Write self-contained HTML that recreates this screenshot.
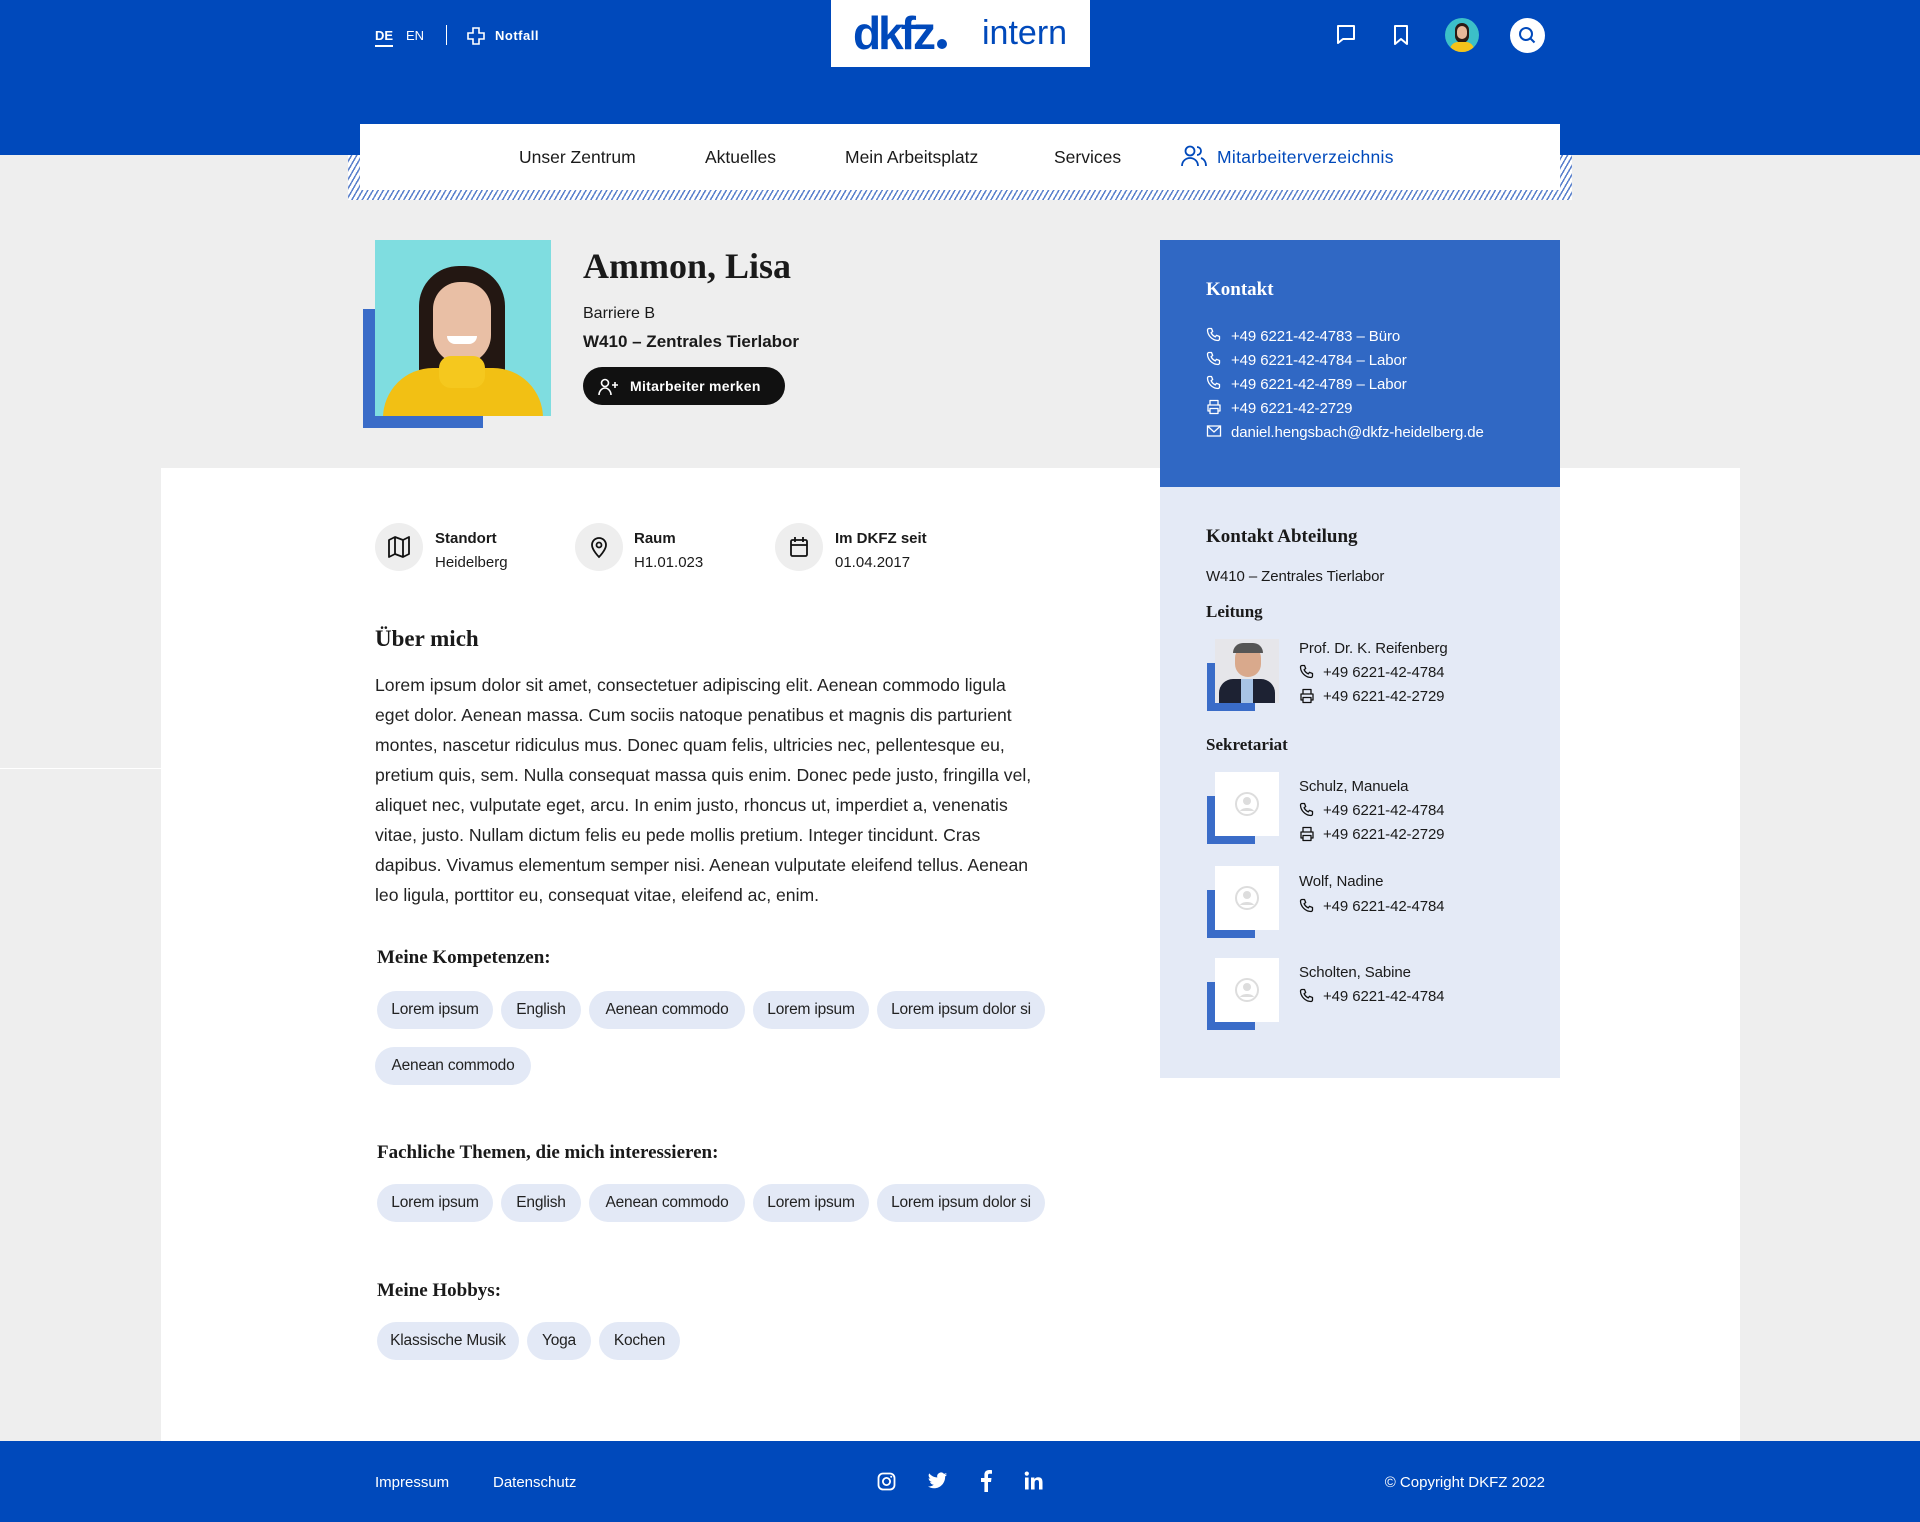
<!DOCTYPE html>
<html><head><meta charset="utf-8"><style>
*{margin:0;padding:0;box-sizing:border-box}
body{width:1920px;height:1522px;position:relative;background:#eeeeee;font-family:"Liberation Sans",sans-serif;color:#1a1a1a;overflow:hidden}
.a{position:absolute}
.serif{font-family:"Liberation Serif",serif;font-weight:bold}
.tag{position:absolute;height:38px;line-height:38px;border-radius:19px;background:#e3e9f6;font-size:15.5px;text-align:center;white-space:nowrap;letter-spacing:-0.2px;color:#222}
.w{color:#fff}
.sb{font-size:15px;white-space:nowrap;letter-spacing:-0.1px}
svg{display:block}
</style></head><body>
<!-- header -->
<div class="a" style="left:0;top:0;width:1920px;height:155px;background:#0049bb"></div>
<div class="a w" style="left:375px;top:28px;font-size:13px;font-weight:bold;border-bottom:2px solid #fff;padding-bottom:2px">DE</div>
<div class="a w" style="left:406px;top:28px;font-size:13px">EN</div>
<div class="a" style="left:446px;top:25px;width:1px;height:20px;background:#fff"></div>
<svg class="a" style="left:467px;top:27px" width="18" height="18" viewBox="0 0 18 18"><path d="M6 1h6v5h5v6h-5v5H6v-5H1V6h5z" fill="none" stroke="#fff" stroke-width="1.6"/></svg>
<div class="a w" style="left:495px;top:28px;font-size:13px;font-weight:bold;letter-spacing:0.5px">Notfall</div>
<div class="a" style="left:831px;top:0;width:259px;height:67px;background:#fff"></div>
<div class="a" style="left:853px;top:6px;font-size:46px;font-weight:bold;color:#0049bb;letter-spacing:-3px">dkfz<span style="display:inline-block;width:10px;height:10px;border-radius:50%;background:#0049bb;margin-left:4px"></span></div>
<div class="a" style="left:982px;top:14px;font-size:34px;color:#0049bb">intern</div>
<svg class="a" style="left:1335px;top:24px" width="22" height="22" viewBox="0 0 22 22"><path d="M3 2h16v13H8l-5 4z" fill="none" stroke="#fff" stroke-width="2" stroke-linejoin="round"/></svg>
<svg class="a" style="left:1392px;top:24px" width="18" height="22" viewBox="0 0 18 22"><path d="M3 2h12v18l-6-5-6 5z" fill="none" stroke="#fff" stroke-width="2" stroke-linejoin="round"/></svg>
<div class="a" style="left:1445px;top:18px;width:34px;height:34px;border-radius:50%;background:#3cc0c8;overflow:hidden"><div class="a" style="left:10px;top:5px;width:14px;height:20px;border-radius:7px;background:#2a1a14"></div><div class="a" style="left:12px;top:8px;width:10px;height:13px;border-radius:5px;background:#e6b89a"></div><div class="a" style="left:5px;top:24px;width:24px;height:14px;border-radius:8px 8px 0 0;background:#f5c21a"></div></div>
<div class="a" style="left:1510px;top:18px;width:35px;height:35px;border-radius:50%;background:#fff"></div>
<svg class="a" style="left:1517px;top:25px" width="21" height="21" viewBox="0 0 21 21"><circle cx="9" cy="9" r="6" fill="none" stroke="#0049bb" stroke-width="2"/><path d="M13.5 13.5l4 4" stroke="#0049bb" stroke-width="2"/></svg>
<!-- nav -->
<div class="a" style="left:348px;top:155px;width:1224px;height:45px;background:repeating-linear-gradient(-60deg,#fff 0 3px,#5a80cc 3px 4.5px)"></div>
<div class="a" style="left:360px;top:124px;width:1200px;height:66px;background:#fff"></div>
<div class="a" style="left:519px;top:147px;font-size:17.5px">Unser Zentrum</div>
<div class="a" style="left:705px;top:147px;font-size:17.5px">Aktuelles</div>
<div class="a" style="left:845px;top:147px;font-size:17.5px">Mein Arbeitsplatz</div>
<div class="a" style="left:1054px;top:147px;font-size:17.5px">Services</div>
<svg class="a" style="left:1181px;top:145px" width="26" height="22" viewBox="0 0 26 22"><circle cx="9" cy="6" r="4.5" fill="none" stroke="#0049bb" stroke-width="1.8"/><path d="M1 21c0-5 4-8 8-8s8 3 8 8" fill="none" stroke="#0049bb" stroke-width="1.8"/><path d="M16 2a4 4 0 010 8M20 13c3 1 5 4 5 8" fill="none" stroke="#0049bb" stroke-width="1.8"/></svg>
<div class="a" style="left:1217px;top:147px;font-size:17.5px;color:#0049bb;letter-spacing:0.3px">Mitarbeiterverzeichnis</div>
<!-- white main -->
<div class="a" style="left:161px;top:468px;width:1579px;height:973px;background:#fff"></div>
<div class="a" style="left:0;top:768px;width:161px;height:1px;background:#fff"></div>
<!-- profile -->
<div class="a" style="left:363px;top:309px;width:120px;height:119px;background:#3a6cc8"></div>
<div class="a" style="left:375px;top:240px;width:176px;height:176px;background:#7fdde0;overflow:hidden">
 <div class="a" style="left:44px;top:26px;width:86px;height:130px;border-radius:40px 40px 10px 10px;background:#231712"></div>
 <div class="a" style="left:58px;top:42px;width:58px;height:82px;border-radius:28px 28px 30px 30px;background:#e9bfa5"></div>
 <div class="a" style="left:72px;top:96px;width:30px;height:8px;border-radius:0 0 10px 10px;background:#fff"></div>
 <div class="a" style="left:8px;top:128px;width:160px;height:70px;border-radius:50px 50px 0 0;background:#f2c014"></div>
 <div class="a" style="left:64px;top:116px;width:46px;height:32px;border-radius:12px;background:#f5c81e"></div>
</div>
<div class="a serif" style="left:583px;top:245px;font-size:36px">Ammon, Lisa</div>
<div class="a" style="left:583px;top:305px;font-size:16px">Barriere B</div>
<div class="a" style="left:583px;top:332px;font-size:17px;font-weight:bold">W410 – Zentrales Tierlabor</div>
<div class="a" style="left:583px;top:367px;width:202px;height:38px;border-radius:19px;background:#111"></div>
<svg class="a" style="left:598px;top:378px" width="22" height="18" viewBox="0 0 22 18"><circle cx="7" cy="5" r="3.5" fill="none" stroke="#fff" stroke-width="1.6"/><path d="M1 17c0-4 3-7 6-7s6 3 6 7" fill="none" stroke="#fff" stroke-width="1.6"/><path d="M17 4v6M14 7h6" stroke="#fff" stroke-width="1.6"/></svg>
<div class="a w" style="left:630px;top:378px;font-size:14px;font-weight:bold;letter-spacing:0.3px">Mitarbeiter merken</div>
<!-- info -->
<div class="a" style="left:375px;top:523px;width:48px;height:48px;border-radius:50%;background:#eeeeee"></div>
<svg class="a" style="left:387px;top:535px" width="24" height="24" viewBox="0 0 24 24"><path d="M2 5l6-3 8 3 6-3v17l-6 3-8-3-6 3zM8 2v17M16 5v17" fill="none" stroke="#111" stroke-width="1.8" stroke-linejoin="round"/></svg>
<div class="a" style="left:435px;top:530px;font-size:15px;font-weight:bold">Standort</div>
<div class="a" style="left:435px;top:554px;font-size:15px">Heidelberg</div>
<div class="a" style="left:575px;top:523px;width:48px;height:48px;border-radius:50%;background:#eeeeee"></div>
<svg class="a" style="left:587px;top:535px" width="24" height="24" viewBox="0 0 24 24"><path d="M12 22s-7-7-7-12a7 7 0 0114 0c0 5-7 12-7 12z" fill="none" stroke="#111" stroke-width="1.8"/><circle cx="12" cy="10" r="2.5" fill="none" stroke="#111" stroke-width="1.8"/></svg>
<div class="a" style="left:634px;top:530px;font-size:15px;font-weight:bold">Raum</div>
<div class="a" style="left:634px;top:554px;font-size:15px">H1.01.023</div>
<div class="a" style="left:775px;top:523px;width:48px;height:48px;border-radius:50%;background:#eeeeee"></div>
<svg class="a" style="left:787px;top:535px" width="24" height="24" viewBox="0 0 24 24"><rect x="4" y="5" width="16" height="16" rx="1.5" fill="none" stroke="#111" stroke-width="1.8"/><path d="M4 10h16M8 2v5M16 2v5" stroke="#111" stroke-width="1.8"/></svg>
<div class="a" style="left:835px;top:530px;font-size:15px;font-weight:bold">Im DKFZ seit</div>
<div class="a" style="left:835px;top:554px;font-size:15px">01.04.2017</div>
<!-- about -->
<div class="a serif" style="left:375px;top:626px;font-size:23px">Über mich</div>
<div class="a" style="left:375px;top:670px;width:660px;font-size:17.6px;line-height:30px;color:#222">Lorem ipsum dolor sit amet, consectetuer adipiscing elit. Aenean commodo ligula eget dolor. Aenean massa. Cum sociis natoque penatibus et magnis dis parturient montes, nascetur ridiculus mus. Donec quam felis, ultricies nec, pellentesque eu, pretium quis, sem. Nulla consequat massa quis enim. Donec pede justo, fringilla vel, aliquet nec, vulputate eget, arcu. In enim justo, rhoncus ut, imperdiet a, venenatis vitae, justo. Nullam dictum felis eu pede mollis pretium. Integer tincidunt. Cras dapibus. Vivamus elementum semper nisi. Aenean vulputate eleifend tellus. Aenean leo ligula, porttitor eu, consequat vitae, eleifend ac, enim.</div>
<div class="a serif" style="left:377px;top:947px;font-size:19px">Meine Kompetenzen:</div>
<div class="tag" style="left:377px;top:991px;width:116px">Lorem ipsum</div>
<div class="tag" style="left:501px;top:991px;width:80px">English</div>
<div class="tag" style="left:589px;top:991px;width:156px">Aenean commodo</div>
<div class="tag" style="left:753px;top:991px;width:116px">Lorem ipsum</div>
<div class="tag" style="left:877px;top:991px;width:168px">Lorem ipsum dolor si</div>
<div class="tag" style="left:375px;top:1047px;width:156px">Aenean commodo</div>
<div class="a serif" style="left:377px;top:1142px;font-size:19px">Fachliche Themen, die mich interessieren:</div>
<div class="tag" style="left:377px;top:1184px;width:116px">Lorem ipsum</div>
<div class="tag" style="left:501px;top:1184px;width:80px">English</div>
<div class="tag" style="left:589px;top:1184px;width:156px">Aenean commodo</div>
<div class="tag" style="left:753px;top:1184px;width:116px">Lorem ipsum</div>
<div class="tag" style="left:877px;top:1184px;width:168px">Lorem ipsum dolor si</div>
<div class="a serif" style="left:377px;top:1280px;font-size:19px">Meine Hobbys:</div>
<div class="tag" style="left:377px;top:1322px;width:142px">Klassische Musik</div>
<div class="tag" style="left:527px;top:1322px;width:64px">Yoga</div>
<div class="tag" style="left:599px;top:1322px;width:81px">Kochen</div>
<!-- sidebar -->
<div class="a" style="left:1160px;top:240px;width:400px;height:247px;background:#3068c4"></div>
<div class="a" style="left:1160px;top:487px;width:400px;height:591px;background:#e4eaf6"></div>
<div class="a serif w" style="left:1206px;top:279px;font-size:19px">Kontakt</div>
<svg width="0" height="0" style="position:absolute"><defs>
<symbol id="ph" viewBox="0 0 16 16"><path d="M3 1.5l2.5 0 1.2 3-1.6 1.2c.8 1.8 2.4 3.4 4.2 4.2l1.2-1.6 3 1.2v2.5c0 .8-.7 1.5-1.5 1.5C6.5 13.5 1.5 8.5 1.5 3c0-.8.7-1.5 1.5-1.5z" fill="none" stroke="currentColor" stroke-width="1.3" stroke-linejoin="round"/></symbol>
<symbol id="fx" viewBox="0 0 16 16"><path d="M4 6V1.5h8V6M4 12H2V6h12v6h-2M4 9.5h8v5H4z" fill="none" stroke="currentColor" stroke-width="1.3" stroke-linejoin="round"/></symbol>
<symbol id="ml" viewBox="0 0 16 16"><rect x="1.5" y="3" width="13" height="10" fill="none" stroke="currentColor" stroke-width="1.3"/><path d="M1.5 3l6.5 6 6.5-6" fill="none" stroke="currentColor" stroke-width="1.3"/></symbol>
</defs></svg>
<svg class="a" style="left:1206px;top:327px;color:#fff" width="16" height="16"><use href="#ph"/></svg><div class="a w sb" style="left:1231px;top:328px">+49 6221-42-4783 – Büro</div>
<svg class="a" style="left:1206px;top:351px;color:#fff" width="16" height="16"><use href="#ph"/></svg><div class="a w sb" style="left:1231px;top:352px">+49 6221-42-4784 – Labor</div>
<svg class="a" style="left:1206px;top:375px;color:#fff" width="16" height="16"><use href="#ph"/></svg><div class="a w sb" style="left:1231px;top:376px">+49 6221-42-4789 – Labor</div>
<svg class="a" style="left:1206px;top:399px;color:#fff" width="16" height="16"><use href="#fx"/></svg><div class="a w sb" style="left:1231px;top:400px">+49 6221-42-2729</div>
<svg class="a" style="left:1206px;top:423px;color:#fff" width="16" height="16"><use href="#ml"/></svg><div class="a w sb" style="left:1231px;top:424px">daniel.hengsbach@dkfz-heidelberg.de</div>
<div class="a serif" style="left:1206px;top:526px;font-size:19px">Kontakt Abteilung</div>
<div class="a sb" style="left:1206px;top:568px">W410 – Zentrales Tierlabor</div>
<div class="a serif" style="left:1206px;top:602px;font-size:17px">Leitung</div>
<div class="a" style="left:1207px;top:663px;width:48px;height:48px;background:#3a6cc8"></div>
<div class="a" style="left:1215px;top:639px;width:64px;height:64px;background:#e6e6ea;overflow:hidden"><div class="a" style="left:20px;top:6px;width:26px;height:32px;border-radius:13px;background:#d9a98c"></div><div class="a" style="left:18px;top:4px;width:30px;height:10px;border-radius:10px 10px 0 0;background:#555"></div><div class="a" style="left:4px;top:40px;width:56px;height:30px;border-radius:14px 14px 0 0;background:#1d2233"></div><div class="a" style="left:26px;top:40px;width:12px;height:24px;background:#a8c4e6"></div></div>
<div class="a sb" style="left:1299px;top:640px">Prof. Dr. K. Reifenberg</div>
<svg class="a" style="left:1299px;top:664px;color:#111" width="16" height="16"><use href="#ph"/></svg><div class="a sb" style="left:1323px;top:664px">+49 6221-42-4784</div>
<svg class="a" style="left:1299px;top:688px;color:#111" width="16" height="16"><use href="#fx"/></svg><div class="a sb" style="left:1323px;top:688px">+49 6221-42-2729</div>
<div class="a serif" style="left:1206px;top:735px;font-size:17px">Sekretariat</div>
<!-- sec 1 -->
<div class="a" style="left:1207px;top:796px;width:48px;height:48px;background:#3a6cc8"></div>
<div class="a" style="left:1215px;top:772px;width:64px;height:64px;background:#fff"></div>
<svg class="a" style="left:1235px;top:792px" width="24" height="24" viewBox="0 0 24 24"><circle cx="12" cy="12" r="11" fill="none" stroke="#ddd" stroke-width="2"/><circle cx="12" cy="9" r="4" fill="#ddd"/><path d="M5 19c2-4 12-4 14 0" fill="#ddd"/></svg>
<div class="a sb" style="left:1299px;top:778px">Schulz, Manuela</div>
<svg class="a" style="left:1299px;top:802px;color:#111" width="16" height="16"><use href="#ph"/></svg><div class="a sb" style="left:1323px;top:802px">+49 6221-42-4784</div>
<svg class="a" style="left:1299px;top:826px;color:#111" width="16" height="16"><use href="#fx"/></svg><div class="a sb" style="left:1323px;top:826px">+49 6221-42-2729</div>
<!-- sec 2 -->
<div class="a" style="left:1207px;top:890px;width:48px;height:48px;background:#3a6cc8"></div>
<div class="a" style="left:1215px;top:866px;width:64px;height:64px;background:#fff"></div>
<svg class="a" style="left:1235px;top:886px" width="24" height="24" viewBox="0 0 24 24"><circle cx="12" cy="12" r="11" fill="none" stroke="#ddd" stroke-width="2"/><circle cx="12" cy="9" r="4" fill="#ddd"/><path d="M5 19c2-4 12-4 14 0" fill="#ddd"/></svg>
<div class="a sb" style="left:1299px;top:873px">Wolf, Nadine</div>
<svg class="a" style="left:1299px;top:898px;color:#111" width="16" height="16"><use href="#ph"/></svg><div class="a sb" style="left:1323px;top:898px">+49 6221-42-4784</div>
<!-- sec 3 -->
<div class="a" style="left:1207px;top:982px;width:48px;height:48px;background:#3a6cc8"></div>
<div class="a" style="left:1215px;top:958px;width:64px;height:64px;background:#fff"></div>
<svg class="a" style="left:1235px;top:978px" width="24" height="24" viewBox="0 0 24 24"><circle cx="12" cy="12" r="11" fill="none" stroke="#ddd" stroke-width="2"/><circle cx="12" cy="9" r="4" fill="#ddd"/><path d="M5 19c2-4 12-4 14 0" fill="#ddd"/></svg>
<div class="a sb" style="left:1299px;top:964px">Scholten, Sabine</div>
<svg class="a" style="left:1299px;top:988px;color:#111" width="16" height="16"><use href="#ph"/></svg><div class="a sb" style="left:1323px;top:988px">+49 6221-42-4784</div>
<!-- footer -->
<div class="a" style="left:0;top:1441px;width:1920px;height:81px;background:#0049bb"></div>
<div class="a w" style="left:375px;top:1474px;font-size:15px">Impressum</div>
<div class="a w" style="left:493px;top:1474px;font-size:15px">Datenschutz</div>
<svg class="a" style="left:877px;top:1472px" width="19" height="19" viewBox="0 0 19 19"><rect x="1.5" y="1.5" width="16" height="16" rx="4.5" fill="none" stroke="#fff" stroke-width="1.8"/><circle cx="9.5" cy="9.5" r="3.6" fill="none" stroke="#fff" stroke-width="1.8"/><circle cx="14.2" cy="4.8" r="1" fill="#fff"/></svg>
<svg class="a" style="left:927px;top:1472px" width="21" height="18" viewBox="0 0 24 20"><path d="M23 2.5c-.8.4-1.7.6-2.6.7.9-.6 1.6-1.4 2-2.5-.9.5-1.9.9-2.9 1.1A4.5 4.5 0 0011.8 6 12.8 12.8 0 012.5 1.3a4.5 4.5 0 001.4 6c-.7 0-1.4-.2-2-.6 0 2.2 1.5 4 3.6 4.4-.7.2-1.4.2-2 .1.6 1.8 2.2 3.1 4.2 3.1A9 9 0 011 16.2 12.8 12.8 0 007.9 18.3c8.3 0 12.8-6.9 12.8-12.8v-.6c.9-.6 1.600-1.4 2.3-2.4z" fill="#fff"/></svg>
<svg class="a" style="left:980px;top:1470px" width="12" height="22" viewBox="0 0 12 22"><path d="M8 22V12h3l.5-4H8V5.5c0-1 .3-1.8 1.8-1.8H12V.2C11.6.1 10.4 0 9.1 0 6.3 0 4.4 1.7 4.4 4.8V8H1v4h3.4v10z" fill="#fff"/></svg>
<svg class="a" style="left:1024px;top:1471px" width="19" height="19" viewBox="0 0 19 19"><rect x="1" y="6.5" width="3.6" height="12" fill="#fff"/><circle cx="2.8" cy="2.6" r="2.1" fill="#fff"/><path d="M7 6.5h3.4v1.7c.6-1 1.8-2 3.8-2 3.5 0 4.3 2.3 4.3 5.3v7H15v-6.2c0-1.5 0-3.3-2-3.3s-2.4 1.6-2.4 3.2v6.3H7z" fill="#fff"/></svg>
<div class="a w" style="left:1383px;top:1474px;font-size:15px;width:162px;text-align:right">© Copyright DKFZ 2022</div>
</body></html>
